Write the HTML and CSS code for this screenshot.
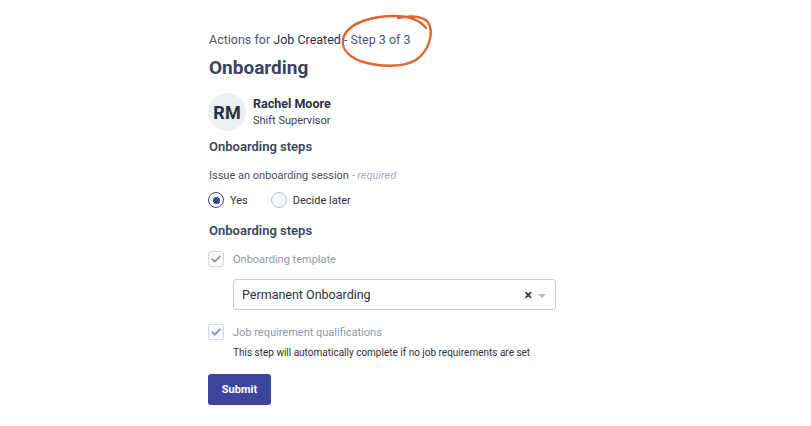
FILE: index.html
```html
<!DOCTYPE html>
<html>
<head>
<meta charset="utf-8">
<link rel="stylesheet" href="styles.css">
</head>
<body>
<main class="panel">
  <div class="crumb">
    <span class="muted">Actions for</span> <span class="strong">Job Created</span> <span class="muted">- Step 3 of 3</span>
    <svg class="scribble" width="100" height="60" viewBox="0 0 100 60" fill="none">
      <path d="M60 8 C72 5 84 6 90 12 C96 22 92 40 78 50 C64 58 40 57 22 51 C8 45 2 36 6 26 C12 12 36 6 56 6 C70 6 82 10 88 18" stroke="#e0642f" stroke-width="2.4" stroke-linecap="round"/>
    </svg>
  </div>
  <h1 class="title">Onboarding</h1>
  <div class="person">
    <div class="avatar">RM</div>
    <div class="person-info">
      <div class="name">Rachel Moore</div>
      <div class="role">Shift Supervisor</div>
    </div>
  </div>
  <h2 class="section">Onboarding steps</h2>
  <div class="field-label">Issue an onboarding session <span class="req">- required</span></div>
  <div class="radios">
    <label class="radio"><span class="dot checked"></span>Yes</label>
    <label class="radio"><span class="dot"></span>Decide later</label>
  </div>
  <h2 class="section section2">Onboarding steps</h2>
  <div class="check">
    <span class="box"><svg width="10" height="8" viewBox="0 0 10 8"><path d="M1.2 4.2 L3.8 6.6 L8.8 1.4" stroke="#8c96ab" stroke-width="1.8" fill="none" stroke-linecap="round" stroke-linejoin="round"/></svg></span>
    <span class="check-text">Onboarding template</span>
  </div>
  <div class="select">
    <span class="select-value">Permanent Onboarding</span>
    <span class="select-clear">×</span>
    <span class="select-caret"></span>
  </div>
  <div class="check check2">
    <span class="box"><svg width="10" height="8" viewBox="0 0 10 8"><path d="M1.2 4.2 L3.8 6.6 L8.8 1.4" stroke="#8c96ab" stroke-width="1.8" fill="none" stroke-linecap="round" stroke-linejoin="round"/></svg></span>
    <span class="check-text">Job requirement qualifications</span>
  </div>
  <div class="help">This step will automatically complete if no job requirements are set</div>
  <button class="submit">Submit</button>
</main>
</body>
</html>
```
FILE: styles.css
```css
* { box-sizing: border-box; }
html, body { margin: 0; background: #ffffff; }
body {
  font-family: Roboto, "Noto Sans", Arial, sans-serif;
  color: #333b4a;
  width: 811px;
  height: 426px;
  overflow: hidden;
}
.panel {
  display: flex;
  flex-direction: column;
  align-items: flex-start;
  padding: 31px 0 0 208px;
}
.crumb {
  position: relative;
  font-size: 12.5px;
  line-height: 18px;
  padding-left: 1px;
}
.muted { color: #4f5869; }
.strong { color: #2b3140; }
.scribble {
  position: absolute;
  left: 130px;
  top: -21px;
}
.title {
  margin: 7px 0 0 1px;
  font-size: 19px;
  line-height: 24px;
  font-weight: 700;
  color: #39455a;
}
.person {
  display: flex;
  align-items: flex-start;
  margin-top: 13px;
  gap: 7px;
}
.avatar {
  width: 38px;
  height: 38px;
  border-radius: 50%;
  background: #eceff4;
  color: #2a303c;
  font-weight: 700;
  font-size: 18px;
  display: flex;
  align-items: center;
  justify-content: center;
}
.person-info { padding-top: 3px; }
.name {
  font-size: 12.5px;
  line-height: 16px;
  font-weight: 700;
  color: #2b3140;
}
.role {
  margin-top: 2px;
  font-size: 11px;
  line-height: 14px;
  color: #3a4150;
}
.section {
  margin: 7px 0 0 1px;
  font-size: 13px;
  line-height: 18px;
  font-weight: 600;
  color: #39455a;
}
.section2 { margin-top: 13px; }
.field-label {
  margin: 12px 0 0 1px;
  font-size: 11px;
  line-height: 16px;
  color: #4a5263;
}
.req { color: #a3abbb; font-style: italic; }
.radios {
  display: flex;
  gap: 23px;
  margin-top: 7px;
  height: 18px;
  align-items: center;
}
.radio {
  display: flex;
  align-items: center;
  gap: 6px;
  font-size: 11px;
  color: #2b3140;
}
.dot {
  width: 16px;
  height: 16px;
  border-radius: 50%;
  border: 1px solid #b9c1d0;
  background: #f7f9fc;
  display: flex;
  align-items: center;
  justify-content: center;
}
.dot.checked { border: 1.5px solid #3b469b; background: #fff; }
.dot.checked::after {
  content: "";
  width: 7px;
  height: 7px;
  border-radius: 50%;
  background: #3b469b;
}
.check {
  display: flex;
  align-items: center;
  gap: 9px;
  height: 18px;
  margin-top: 10px;
}
.check2 { margin-top: 13px; }
.box {
  width: 16px;
  height: 16px;
  border: 1px solid #cfd5e0;
  border-radius: 3px;
  background: #f7f8fb;
  display: flex;
  align-items: center;
  justify-content: center;
}
.check-text {
  font-size: 11px;
  color: #8e97a8;
}
.select {
  margin: 11px 0 0 25px;
  width: 323px;
  height: 31px;
  border: 1px solid #c7ccd5;
  border-radius: 3px;
  display: flex;
  align-items: center;
  padding: 0 9px 0 8px;
}
.select-value {
  flex: 1;
  font-size: 12.5px;
  color: #2b3140;
}
.select-clear {
  font-size: 14px;
  font-weight: 700;
  color: #333b4a;
  margin-right: 6px;
}
.select-caret {
  width: 0;
  height: 0;
  border-left: 4px solid transparent;
  border-right: 4px solid transparent;
  border-top: 4px solid #b3b9c4;
  margin-top: 2px;
}
.help {
  margin: 5px 0 0 25px;
  font-size: 10px;
  line-height: 14px;
  color: #2b3140;
}
.submit {
  margin-top: 14px;
  width: 63px;
  height: 31px;
  border: none;
  border-radius: 3px;
  background: #3b469b;
  color: #ffffff;
  font-family: Roboto, "Noto Sans", Arial, sans-serif;
  font-size: 11px;
  font-weight: 700;
  padding: 0;
}
```
